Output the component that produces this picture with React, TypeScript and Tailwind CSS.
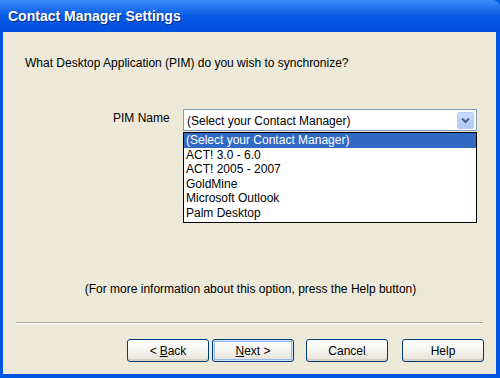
import React from 'react';

const items = [
  '(Select your Contact Manager)',
  'ACT! 3.0 - 6.0',
  'ACT! 2005 - 2007',
  'GoldMine',
  'Microsoft Outlook',
  'Palm Desktop',
];

const XpButton: React.FC<{ children: React.ReactNode; isDefault?: boolean }> = ({ children, isDefault }) => (
  <button
    className={
      'w-[82px] h-[23px] rounded-[3px] border border-[#003C74] bg-gradient-to-b from-white via-[#F5F4EE] to-[#E3E1D6] text-[12px] text-black flex items-center justify-center ' +
      (isDefault ? 'shadow-[inset_0_0_0_1px_#CEE7FF,inset_0_0_0_2px_#98B8EA]' : 'shadow-[inset_0_-2px_0_#D6D0C5]')
    }
  >
    {children}
  </button>
);

export default function App() {
  return (
    <div className="w-[500px] h-[378px] flex flex-col overflow-hidden font-['Liberation_Sans',Arial,sans-serif] bg-[#0054E3]">
      {/* Title bar */}
      <div className="h-[32px] shrink-0 rounded-tr-[7px] bg-gradient-to-b from-[#3A8CF6] via-[#0858E6] to-[#0050DC] flex items-center pl-[8px]">
        <span className="text-white font-bold text-[14px] [text-shadow:1px_1px_#0A2A8A]">Contact Manager Settings</span>
      </div>

      {/* Body */}
      <div className="flex-1 mx-[3px] mr-[4px] mb-[4px] bg-[#ECE9D8] flex flex-col text-[12px] text-black">
        <p className="mt-[24px] ml-[22px] leading-[14px]">
          What Desktop Application (PIM) do you wish to synchronize?
        </p>

        <div className="mt-[39px] flex items-start">
          <span className="ml-[110px] mt-[2px] w-[70px] leading-[14px]">PIM Name</span>
          <div className="flex flex-col w-[294px]">
            <div className="h-[22px] border border-[#7F9DB9] bg-white flex items-center pl-[3px] pr-[2px]">
              <span className="flex-1 leading-[14px] pt-[1px]">(Select your Contact Manager)</span>
              <div className="w-[17px] h-[17px] rounded-[2px] border border-[#B6CBF5] bg-gradient-to-b from-[#C9DAFB] to-[#B0C8F6] flex items-center justify-center">
                <svg width="9" height="7" viewBox="0 0 9 7">
                  <path d="M1 1.5 L4.5 5 L8 1.5" fill="none" stroke="#4D6185" strokeWidth="2" />
                </svg>
              </div>
            </div>
            <div className="mt-[1px] border border-black bg-white h-[91px] flex flex-col">
              {items.map((it, i) => (
                <div
                  key={it}
                  className={
                    'h-[14.6px] leading-[14.6px] pl-[2px] ' +
                    (i === 0 ? 'bg-[#316AC5] text-white' : '')
                  }
                >
                  {it}
                </div>
              ))}
            </div>
          </div>
        </div>

        <p className="mt-[59px] text-center leading-[14px] pl-[2px]">
          (For more information about this option, press the Help button)
        </p>

        <div className="mt-[26px] mx-[13px] border-t border-[#ACA899] border-b border-b-white" />

        <div className="mt-[15px] flex items-center pl-[124px]">
          <XpButton>
            &lt; <span className="underline ml-[3px]">B</span>ack
          </XpButton>
          <div className="ml-[3px]">
            <XpButton isDefault>
              <span className="underline">N</span>ext &gt;
            </XpButton>
          </div>
          <div className="ml-[12px]">
            <XpButton>Cancel</XpButton>
          </div>
          <div className="ml-[14px]">
            <XpButton>Help</XpButton>
          </div>
        </div>
      </div>
    </div>
  );
}
